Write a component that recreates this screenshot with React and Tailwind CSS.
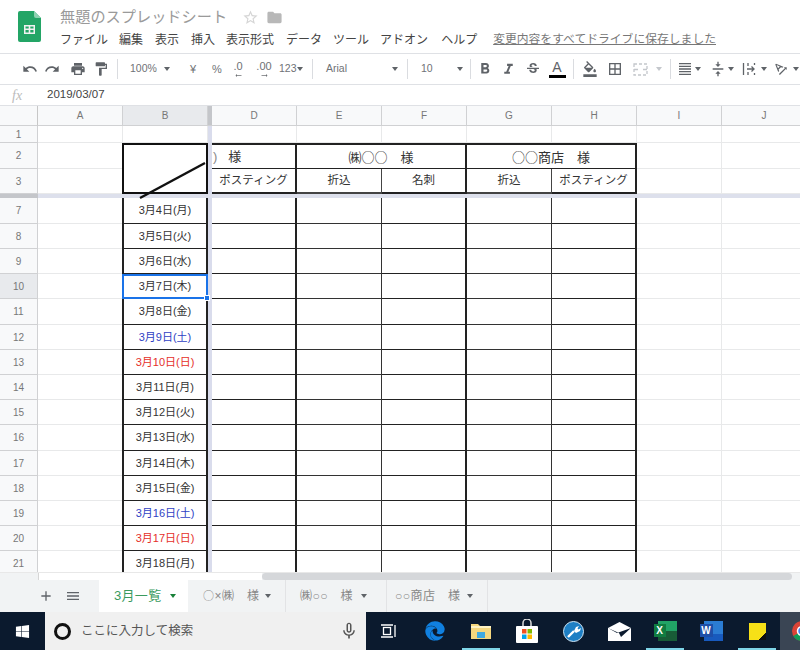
import { MdUndo, MdRedo, MdPrint, MdFormatPaint, MdFormatBold, MdFormatItalic, MdStrikethroughS, MdFormatColorFill, MdBorderAll, MdFormatAlignJustify, MdVerticalAlignCenter, MdTextRotationAngleup, MdStarBorder, MdFolder, MdAdd, MdMenu, MdMicNone, MdArrowRightAlt } from 'react-icons/md';
import { FaWindows, FaEdge } from 'react-icons/fa';

const FONT = "font-['Liberation_Sans','Noto_Sans_CJK_JP',sans-serif]";
const CJK = "font-['Noto_Sans_CJK_JP',sans-serif]";

const Caret = ({ className = '' }) => (
  <span className={`w-0 h-0 shrink-0 border-x-[3px] border-x-transparent border-t-[4px] border-t-[#5f6368] ${className}`} />
);

const Sep = ({ className = '' }) => <span className={`w-px h-[20px] shrink-0 bg-[#dadce0] ${className}`} />;

const Tool = ({ icon: Icon, className = '', size = 16, color = 'text-[#5f6368]' }) => (
  <span className={`flex justify-center shrink-0 ${color} ${className}`}><Icon size={size} /></span>
);

const Toolbar = () => (
  <div className="h-[32px] shrink-0 flex items-center pl-[19px] border-y border-[#dfe1e5] text-[11px] text-[#6f7276]">
    <Tool icon={MdUndo} className="w-[22px]" />
    <Tool icon={MdRedo} className="w-[22px]" />
    <Tool icon={MdPrint} className="w-[22px] ml-[4px]" />
    <Tool icon={MdFormatPaint} className="w-[22px] ml-[1px]" />
    <Sep className="ml-[5px]" />
    <span className="w-[24px] ml-[12px] text-[10.5px]">100%</span>
    <Caret className="ml-[10px]" />
    <span className="w-[14px] ml-[16px] text-center">¥</span>
    <span className="w-[14px] ml-[10px] text-center">%</span>
    <span className="w-[20px] ml-[4px] flex flex-col items-center leading-[11px] pt-[2px]">.0<MdArrowRightAlt size={9} className="rotate-180 -mt-[1px]" /></span>
    <span className="w-[24px] ml-[4px] flex flex-col items-center leading-[11px] pt-[2px]">.00<MdArrowRightAlt size={9} className="-mt-[1px]" /></span>
    <span className="w-[17px] ml-[3px] text-[10.5px]">123</span>
    <Caret className="ml-[1px]" />
    <Sep className="ml-[9px]" />
    <span className="w-[40px] ml-[13px] text-[10.5px]">Arial</span>
    <Caret className="ml-[26px]" />
    <Sep className="ml-[9px]" />
    <span className="w-[12px] ml-[13px] text-[10.5px]">10</span>
    <Caret className="ml-[24px]" />
    <Sep className="ml-[7px]" />
    <Tool icon={MdFormatBold} size={18} className="w-[22px] ml-[3px]" />
    <Tool icon={MdFormatItalic} size={17} className="w-[22px] ml-[1px]" />
    <Tool icon={MdStrikethroughS} className="w-[22px] ml-[3px]" />
    <span className="w-[22px] ml-[2px] flex flex-col items-center text-[14px] leading-[15px] text-[#5f6368]">A<span className="w-[17px] h-[3px] bg-black" /></span>
    <Sep className="ml-[5px]" />
    <Tool icon={MdFormatColorFill} className="w-[22px] ml-[5px]" />
    <Tool icon={MdBorderAll} className="w-[22px] ml-[3px]" />
    <span className="w-[22px] ml-[3px] flex justify-center">
      <svg width="15" height="13" viewBox="0 0 15 13" fill="none" stroke="#c4c7cc" strokeWidth="1.3" strokeDasharray="3 2">
        <rect x="1" y="1" width="13" height="11" />
        <path d="M1 6.500h13" strokeDasharray="4 5" />
      </svg>
    </span>
    <Caret className="ml-[5px] border-t-[#c4c7cc]" />
    <Sep className="ml-[8px]" />
    <Tool icon={MdFormatAlignJustify} className="w-[18px] ml-[5px]" />
    <Caret className="ml-[1px]" />
    <Tool icon={MdVerticalAlignCenter} className="w-[18px] ml-[8px]" />
    <Caret className="ml-[1px]" />
    <span className="w-[18px] ml-[6px] flex justify-center">
      <svg width="14" height="14" viewBox="0 0 14 14" fill="none" stroke="#5f6368" strokeWidth="1.3">
        <path d="M1.500 1v12" />
        <path d="M5 7h7M9.500 4.500 12 7 9.500 9.500" />
        <path d="M6 1v3M6 10v3M12.500 1v2M12.500 11v2" />
      </svg>
    </span>
    <Caret className="ml-[3px]" />
    <Tool icon={MdTextRotationAngleup} className="w-[18px] ml-[5px]" />
    <Caret className="ml-[3px]" />
  </div>
);

const colHeaders = [
  { label: '', cls: 'bg-[#f8f9fa] border-r-[#c7c7c7]' },
  { label: 'A', cls: 'bg-[#f8f9fa]' },
  { label: 'B', cls: 'bg-[#e8eaed]' },
  { label: '', cls: 'bg-[#c4c6ca] !border-r-0' },
  { label: 'D', cls: 'bg-[#f8f9fa]' },
  { label: 'E', cls: 'bg-[#f8f9fa]' },
  { label: 'F', cls: 'bg-[#f8f9fa]' },
  { label: 'G', cls: 'bg-[#f8f9fa]' },
  { label: 'H', cls: 'bg-[#f8f9fa]' },
  { label: 'I', cls: 'bg-[#f8f9fa]' },
  { label: 'J', cls: 'bg-[#f8f9fa]' },
];

const dates = [
  { row: 7, text: '3月4日(月)' },
  { row: 8, text: '3月5日(火)' },
  { row: 9, text: '3月6日(水)' },
  { row: 10, text: '3月7日(木)', selected: true },
  { row: 11, text: '3月8日(金)' },
  { row: 12, text: '3月9日(土)', color: 'text-[#2f3fc4]' },
  { row: 13, text: '3月10日(日)', color: 'text-[#e5302a]' },
  { row: 14, text: '3月11日(月)' },
  { row: 15, text: '3月12日(火)' },
  { row: 16, text: '3月13日(水)' },
  { row: 17, text: '3月14日(木)' },
  { row: 18, text: '3月15日(金)' },
  { row: 19, text: '3月16日(土)', color: 'text-[#2f3fc4]' },
  { row: 20, text: '3月17日(日)', color: 'text-[#e5302a]' },
  { row: 21, text: '3月18日(月)' },
];

const RowHead = ({ n, active }) => (
  <div className={`flex items-center justify-center text-[10px] text-[#777] border-r border-b border-[#d0d1d3] ${active ? 'bg-[#e8eaed]' : 'bg-[#f8f9fa]'}`}>{n}</div>
);

const light = 'border-r border-b border-[#e8e9ea]';
const VBar = () => <div className="bg-[#d9dcec]" />;

const Sheet = () => (
  <div className="flex-1 min-h-0 overflow-hidden grid grid-cols-[38px_85px_85px_4px_85px_85px_85px_85px_85px_85px_85px] grid-rows-[20px_17px_26px_25px_4px_26px_25px_25px_25px_26px_25px_25px_25px_25px_26px_25px_25px_25px_25px_26px] w-[807px] text-[11.5px] text-[#333]">
    {colHeaders.map((c, i) => (
      <div key={i} className={`flex items-center justify-center text-[10px] text-[#777] border-r border-b border-[#d0d1d3] ${c.cls}`}>{c.label}</div>
    ))}

    {/* row 1 */}
    <RowHead n={1} />
    <div className={light} />
    <div className={light} />
    <VBar />
    {[0, 1, 2, 3, 4, 5, 6].map(i => <div key={i} className={light} />)}

    {/* row 2 */}
    <RowHead n={2} />
    <div className={light} />
    <div className="row-span-2 relative border-2 border-[#111] -ml-px">
      <svg className="absolute -left-[1px] -top-[2px] w-[85px] h-[60px] overflow-visible z-10" viewBox="0 0 85 60" fill="none">
        <line x1="17" y1="55" x2="82" y2="20" stroke="#111" strokeWidth="2.500" />
      </svg>
    </div>
    <VBar />
    <div className="flex items-center pl-[1px] gap-[11px] text-[13px] border-t-2 border-r-2 border-b border-[#222]"><span className="text-[#888]">)</span><span>様</span></div>
    <div className={`col-span-2 flex items-center justify-center text-[13px] border-t-2 border-r-2 border-b border-[#222] ${CJK}`}>㈱○○　様</div>
    <div className={`col-span-2 flex items-center justify-center text-[13px] border-t-2 border-r-2 border-b border-[#222] ${CJK}`}>○○商店　様</div>
    <div className={light} />
    <div className={light} />

    {/* row 3 */}
    <RowHead n={3} />
    <div className={light} />
    <VBar />
    <div className="flex items-center justify-center border-b-2 border-r-2 border-[#222]">ポスティング</div>
    <div className="flex items-center justify-center border-b-2 border-r border-[#444]">折込</div>
    <div className="flex items-center justify-center border-b-2 border-r-2 border-[#222]">名刺</div>
    <div className="flex items-center justify-center border-b-2 border-r border-[#444]">折込</div>
    <div className="flex items-center justify-center border-b-2 border-r-2 border-[#222]">ポスティング</div>
    <div className={light} />
    <div className={light} />

    {/* freeze bar */}
    <div className="bg-[#c4c6ca]" />
    <div className="col-span-10 bg-[#dde0ec]" />

    {dates.map(d => (
      <div key={d.row} className="contents">
        <RowHead n={d.row} active={d.selected} />
        <div className={light} />
        <div className={`relative flex items-center justify-center -ml-px text-[11px] ${d.color || ''} ${d.selected ? 'border-2 border-[#1a73e8]' : 'border-x-2 border-b border-[#222]'}`}>
          {d.text}
          {d.selected && <span className="absolute -right-[4px] -bottom-[4px] w-[6px] h-[6px] bg-[#1a73e8] border border-white z-10" />}
        </div>
        <VBar />
        <div className="border-b border-r-2 border-[#222]" />
        <div className="border-b border-r border-[#333]" />
        <div className="border-b border-r-2 border-[#222]" />
        <div className="border-b border-r border-[#333]" />
        <div className="border-b border-r-2 border-[#222]" />
        <div className={light} />
        <div className={light} />
      </div>
    ))}
  </div>
);

const ScrollBar = () => (
  <div className="h-[8px] shrink-0 flex bg-[#f1f3f4] border-t border-[#e8e8e8]">
    <div className="w-[39px] border-r border-[#d6d6d6]" />
    <div className="w-[223px] bg-white" />
    <div className="w-[530px] bg-[#d5d7da] rounded-full" />
  </div>
);

const SheetTab = ({ label, className = '' }) => (
  <div className={`flex items-center justify-between text-[12px] text-[#888] tracking-[0.5px] border-r border-[#e2e3e5] ${className}`}>
    <span>{label}</span>
    <Caret />
  </div>
);

const Tabs = () => (
  <div className="h-[32px] shrink-0 flex bg-[#f1f3f4]">
    <div className="w-[99px] flex items-center pl-[38px] gap-[11px] text-[#5f6368]">
      <MdAdd size={16} />
      <MdMenu size={16} />
    </div>
    <div className="w-[89px] bg-white flex items-center pl-[15px] gap-[9px] text-[13px] text-[#3a9a5e] tracking-[0.3px]">
      3月一覧
      <Caret className="border-t-[#188038]" />
    </div>
    <SheetTab label={<><span className={`${CJK} text-[11px]`}>○</span>×㈱　様</>} className="w-[98px] pl-[15px] pr-[14px]" />
    <SheetTab label="㈱○○　様" className="w-[101px] pl-[14px] pr-[19px]" />
    <SheetTab label="○○商店　様" className="w-[101px] pl-[8px] pr-[14px]" />
  </div>
);

const TaskItem = ({ children, active, className = '' }) => (
  <div className={`relative w-[46px] h-full shrink-0 flex items-center justify-center ${className}`}>
    {children}
    {active && <span className="absolute bottom-0 left-[4px] right-[4px] h-[2px] bg-[#7fd6e8]" />}
  </div>
);

const Taskbar = () => (
  <div className="h-[38px] shrink-0 flex bg-[#0b1a2e] w-[800px] overflow-hidden">
    <div className="w-[45px] shrink-0 flex items-center justify-center text-white"><FaWindows size={15} /></div>
    <div className="w-[321px] shrink-0 bg-[#f0f0f0] flex items-center pl-[9px] text-[#555] whitespace-nowrap">
      <span className="w-[17px] h-[17px] rounded-full border-[3px] border-[#111] shrink-0" />
      <span className="ml-[10px] text-[12.5px]">ここに入力して検索</span>
      <MdMicNone size={20} className="ml-[146px] shrink-0 text-[#555]" />
    </div>
    <TaskItem>
      <svg width="16" height="14" viewBox="0 0 16 14" fill="none" stroke="#fff" strokeWidth="1.300">
        <rect x="2.500" y="3.500" width="7" height="7" />
        <path d="M0 1h12M0 13h12M14 1v12" />
      </svg>
    </TaskItem>
    <TaskItem><FaEdge size={20} className="text-[#1080e0]" /></TaskItem>
    <TaskItem active>
      <svg width="22" height="18" viewBox="0 0 22 18">
        <path d="M1 2h7l2 2h11v13H1z" fill="#f5d77e" />
        <rect x="1" y="4" width="20" height="2" fill="#fff3c4" />
        <rect x="7" y="10" width="8" height="6" fill="#3fa9e0" />
      </svg>
    </TaskItem>
    <TaskItem>
      <svg width="22" height="24" viewBox="0 0 22 24">
        <path d="M7 7V4a4 4 0 0 1 8 0v3" fill="none" stroke="#ddd" strokeWidth="1.500" />
        <rect x="0" y="7" width="22" height="17" rx="1" fill="#fff" />
        <rect x="6" y="10" width="4.500" height="4.500" fill="#f25022" />
        <rect x="11.500" y="10" width="4.500" height="4.500" fill="#7fba00" />
        <rect x="6" y="15.500" width="4.500" height="4.500" fill="#00a4ef" />
        <rect x="11.500" y="15.500" width="4.500" height="4.500" fill="#ffb900" />
      </svg>
    </TaskItem>
    <TaskItem>
      <svg width="21" height="21" viewBox="0 0 21 21">
        <circle cx="10.500" cy="10.500" r="10" fill="#1e7fc4" stroke="#cfe6f5" strokeWidth="1" />
        <path d="M5 16l6-6" stroke="#fff" strokeWidth="2.400" />
        <path d="M11 10l2-4 3-1-1.500 2.500 1 1L18 7l-1 3-4 2z" fill="#fff" />
      </svg>
    </TaskItem>
    <TaskItem>
      <svg width="23" height="19" viewBox="0 0 23 19">
        <path d="M0 6 11.500 0 23 6v13H0z" fill="#fff" />
        <path d="M0 6l9 5 14-5-10 9-2-4z" fill="#0b1a2e" />
      </svg>
    </TaskItem>
    <TaskItem active>
      <div className="relative w-[23px] h-[20px]">
        <div className="absolute right-0 top-0 w-[19px] h-[20px] bg-[#21a366]" />
        <div className="absolute right-0 top-[10px] w-[19px] h-[10px] bg-[#185c37]" />
        <div className="absolute left-0 top-[3px] w-[12px] h-[13px] bg-[#107c41] flex items-center justify-center text-[10px] font-bold text-white leading-none">X</div>
      </div>
    </TaskItem>
    <TaskItem>
      <div className="relative w-[23px] h-[20px]">
        <div className="absolute right-0 top-0 w-[19px] h-[20px] bg-[#2b7cd3]" />
        <div className="absolute right-0 top-[13px] w-[19px] h-[7px] bg-[#185abd]" />
        <div className="absolute left-0 top-[3px] w-[13px] h-[13px] bg-[#1e4fa8] flex items-center justify-center text-[10px] font-bold text-white leading-none">W</div>
      </div>
    </TaskItem>
    <TaskItem active>
      <svg width="17" height="17" viewBox="0 0 17 17">
        <rect width="17" height="17" fill="#f7e017" />
        <path d="M17 9v8H9z" fill="#111" />
        <path d="M9 17l8-8" stroke="#f7e017" strokeWidth="1" />
      </svg>
    </TaskItem>
    <TaskItem className="bg-[#3a4554] justify-start pl-[12px]">
      <svg width="20" height="20" viewBox="0 0 20 20" className="shrink-0">
        <circle cx="10" cy="10" r="10" fill="#db4437" />
        <path d="M10 10 1.300 15A10 10 0 0 0 10 20z" fill="#0f9d58" />
        <circle cx="10" cy="10" r="4.500" fill="#4285f4" stroke="#fff" strokeWidth="1.500" />
      </svg>
    </TaskItem>
  </div>
);

export default function App() {
  return (
    <div className={`w-[800px] h-[650px] overflow-hidden flex flex-col bg-white ${FONT}`}>
      <div className="h-[53px] shrink-0 flex">
        <div className="w-[60px] flex justify-center pt-[11px] pr-[1px]">
          <svg width="23" height="31" viewBox="0 0 23 31">
            <path d="M2 0h14l7 7v22a2 2 0 0 1-2 2H2a2 2 0 0 1-2-2V2a2 2 0 0 1 2-2z" fill="#23a566" />
            <path d="M16 0l7 7h-5a2 2 0 0 1-2-2z" fill="#8ed1b1" />
            <path d="M6 14h11v9H6zM7.500 15.500v2h3.200v-2zm4.800 0v2h3.200v-2zm-4.800 3.500v2.500h3.200v-2.500zm4.800 0v2.500h3.200v-2.500z" fill="#f1f1f1" fillRule="evenodd" />
          </svg>
        </div>
        <div className="flex-1 min-w-0">
          <div className="flex items-center h-[31px] pt-[3px]">
            <span className="text-[15.2px] text-[#9a9a9a]">無題のスプレッドシート</span>
            <MdStarBorder size={17} className="ml-[15px] text-[#d5d5d5]" />
            <MdFolder size={17} className="ml-[7px] text-[#b8b8b8]" />
          </div>
          <div className="flex items-center h-[18px] text-[12px] text-[#444]">
            <span>ファイル</span>
            <span className="ml-[11px]">編集</span>
            <span className="ml-[12px]">表示</span>
            <span className="ml-[12px]">挿入</span>
            <span className="ml-[11px]">表示形式</span>
            <span className="ml-[12px]">データ</span>
            <span className="ml-[11px]">ツール</span>
            <span className="ml-[11px]">アドオン</span>
            <span className="ml-[13px]">ヘルプ</span>
            <span className="ml-[16px] text-[11.8px] text-[#777] underline">変更内容をすべてドライブに保存しました</span>
          </div>
        </div>
      </div>
      <Toolbar />
      <div className="h-[21px] shrink-0 flex items-center border-b border-[#dfe1e5]">
        <span className="w-[47px] pl-[12px] text-[14px] italic text-[#bbb] font-['Liberation_Serif',serif]">fx</span>
        <span className="text-[11.5px] text-[#444]">2019/03/07</span>
      </div>
      <Sheet />
      <ScrollBar />
      <Tabs />
      <Taskbar />
    </div>
  );
}
